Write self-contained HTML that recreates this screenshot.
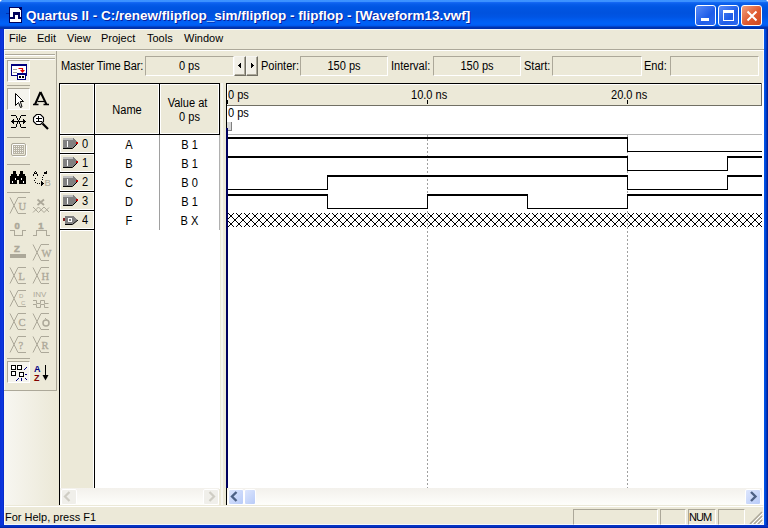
<!DOCTYPE html>
<html><head><meta charset="utf-8"><style>
*{margin:0;padding:0;box-sizing:border-box}
html,body{width:768px;height:528px;overflow:hidden;background:#fff}
body{position:relative;font-family:"Liberation Sans",sans-serif;font-size:11px;color:#000}
.a{position:absolute;white-space:nowrap}
.menu{top:32px}
.btn{top:5px;width:21px;height:21px;border:1px solid #fff;border-radius:3px}
.lbl{top:59px}
.box{top:56px;height:20px;border-top:1px solid #ACA899;border-left:1px solid #ACA899;border-bottom:1px solid #fff;border-right:1px solid #fff;text-align:center;line-height:18px}
.hd{text-align:center;font-size:12px;transform:scaleX(.92);transform-origin:50% 0}
.q{font-size:12px;transform:scaleX(.92);transform-origin:0 0}
.box span{display:inline-block;font-size:12px;transform:scaleX(.92)}
.cell{height:19px;line-height:19px;text-align:center;font-size:12px;transform:scaleX(.92);transform-origin:50% 0}
.sb{height:17px;background:linear-gradient(to bottom,#F3F1EC,#FEFEFB)}
.sp{position:absolute;top:509px;height:16px;border-bottom:1px solid #fff;border-top:1px solid #ACA899;border-left:1px solid #ACA899;border-right:1px solid #fff}
.tb{position:absolute;top:56px;width:12px;height:20px;background:#F1EFE6;border-top:1px solid #F6F5F0;border-left:1px solid #F6F5F0;border-right:1px solid #716F64;border-bottom:1px solid #716F64;box-shadow:inset -1px -1px 0 #ACA899}
.sbtn{position:absolute;width:16px;height:16px;border-radius:2px;border:1px solid #fff}
</style></head><body>
<div class="a" style="left:0;top:0;width:768px;height:528px;background:#0045D8;border-radius:4px 4px 0 0"></div>
<div class="a" style="left:0;top:0;width:768px;height:29px;border-radius:4px 4px 0 0;background:linear-gradient(to bottom,#3D93FF 0px,#3A90FF 2px,#1468F4 2.5px,#085EEA 4px,#0056E3 7px,#0052DE 13px,#0055E4 17px,#005EF2 21px,#0062F8 24px,#0056EA 26px,#0036B4 27px,#0030A8 29px)"></div>
<div class="a" style="left:0;top:29px;width:4px;height:499px;background:linear-gradient(to right,#0A30D4,#0A36E0 60%,#0626C0)"></div>
<div class="a" style="left:764px;top:29px;width:4px;height:499px;background:linear-gradient(to right,#0058EE,#0048D8 40%,#0030B0 70%,#001890)"></div>
<div class="a" style="left:0;top:525px;width:768px;height:3px;background:linear-gradient(to bottom,#0636C8,#0430C0 50%,#0020A0)"></div>
<svg class="a" style="left:0;top:0" width="30" height="30" shape-rendering="crispEdges">
<rect x="6" y="13" width="3" height="1" fill="#0030B0"/>
<rect x="9" y="7" width="13" height="16" fill="#00005A"/>
<rect x="10" y="8" width="11" height="14" fill="#fff"/>
<rect x="19" y="8" width="2" height="1" fill="#00005A"/><rect x="20" y="9" width="1" height="1" fill="#00005A"/>
<rect x="19" y="9" width="1" height="1" fill="#fff"/>
<rect x="10" y="17" width="5" height="2" fill="#00005A"/>
<rect x="13" y="12" width="2" height="7" fill="#00005A"/>
<rect x="13" y="12" width="7" height="3" fill="#00005A"/>
<rect x="18" y="12" width="2" height="7" fill="#00005A"/>
<rect x="18" y="17" width="3" height="2" fill="#00005A"/>
</svg>
<div class="a" style="left:26px;top:8px;font-size:13.5px;font-weight:bold;color:#fff;text-shadow:1px 1px 0 #0A1E9C">Quartus II - C:/renew/flipflop_sim/flipflop - flipflop - [Waveform13.vwf]</div>
<div class="a btn" style="left:695px;background:linear-gradient(135deg,#5A8CF8,#1E5CE8 60%,#2E6AF0)"><div class="a" style="left:5px;top:12px;width:8px;height:3px;background:#fff"></div></div>
<div class="a btn" style="left:718px;background:linear-gradient(135deg,#5A8CF8,#1E5CE8 60%,#2E6AF0)"><div class="a" style="left:4px;top:4px;width:11px;height:11px;border:1px solid #fff;border-top-width:3px"></div></div>
<div class="a btn" style="left:741px;background:linear-gradient(135deg,#F0A080,#E05A30 55%,#D04A20)"><svg class="a" style="left:4px;top:4px" width="12" height="12"><path d="M1.5 1.5L10.5 10.5M10.5 1.5L1.5 10.5" stroke="#fff" stroke-width="2"/></svg></div>
<div class="a" style="left:4px;top:29px;width:760px;height:496px;background:#ECE9D8"></div>
<div class="a" style="left:4px;top:524px;width:760px;height:1px;background:#F4F8FC"></div>
<div class="a" style="left:4px;top:29px;width:760px;height:1px;background:#F4F8FC"></div>
<div class="a" style="left:4px;top:29px;width:1px;height:496px;background:#F4F8FC"></div>
<div class="a" style="left:763px;top:29px;width:1px;height:496px;background:#F4F8FC"></div>
<div class="a" style="left:4px;top:506px;width:760px;height:1px;background:#FFFFFF"></div>
<div class="a menu" style="left:9px">File</div>
<div class="a menu" style="left:37px">Edit</div>
<div class="a menu" style="left:67px">View</div>
<div class="a menu" style="left:101px">Project</div>
<div class="a menu" style="left:147px">Tools</div>
<div class="a menu" style="left:184px">Window</div>
<div class="a" style="left:4px;top:49px;width:760px;height:1px;background:#ACA899"></div>
<div class="a" style="left:4px;top:50px;width:760px;height:1px;background:#fff"></div>
<div class="a" style="left:4px;top:391px;width:52px;height:114px;background:linear-gradient(to right,#F7F6F1,#ECE9D8)"></div>
<div class="a" style="left:56px;top:51px;width:1px;height:340px;background:#ACA899"></div>
<div class="a" style="left:4px;top:390px;width:53px;height:1px;background:#ACA899"></div>
<div class="a" style="left:5px;top:54px;width:50px;height:1px;background:#ACA899"></div>
<div class="a" style="left:5px;top:55px;width:50px;height:1px;background:#fff"></div>
<div class="a" style="left:5px;top:58px;width:50px;height:1px;background:#ACA899"></div>
<div class="a" style="left:5px;top:59px;width:50px;height:1px;background:#fff"></div>
<div class="a" style="left:7px;top:85px;width:23px;height:1px;background:#ACA899"></div>
<div class="a" style="left:7px;top:137px;width:23px;height:1px;background:#ACA899"></div>
<div class="a" style="left:7px;top:164px;width:23px;height:1px;background:#ACA899"></div>
<div class="a" style="left:7px;top:192px;width:23px;height:1px;background:#ACA899"></div>
<div class="a" style="left:7px;top:358px;width:23px;height:1px;background:#ACA899"></div>
<div class="a" style="left:7px;top:60px;width:23px;height:22px;background:#F5F4EE;border-top:1px solid #ACA899;border-left:1px solid #ACA899;border-right:1px solid #fff;border-bottom:1px solid #fff"></div>
<div class="a" style="left:7px;top:88px;width:23px;height:22px;background:#F5F4EE;border-top:1px solid #ACA899;border-left:1px solid #ACA899;border-right:1px solid #fff;border-bottom:1px solid #fff"></div>
<div class="a" style="left:7px;top:361px;width:23px;height:22px;background:#F5F4EE;border-top:1px solid #ACA899;border-left:1px solid #ACA899;border-right:1px solid #fff;border-bottom:1px solid #fff"></div>
<svg class="a" style="left:0;top:0" width="768" height="528"><rect x="11" y="64" width="16" height="12" fill="#000080"/><rect x="12" y="66" width="14" height="9" fill="#fff"/><rect x="13" y="69" width="4" height="1" fill="#A0A0A0"/><rect x="13" y="72" width="4" height="1" fill="#A0A0A0"/><path d="M18.5 68.5 H22.5 V71" stroke="#E00000" fill="none" stroke-width="1.2"/><path d="M20 70 H25 L22.5 73 Z" fill="#E00000"/><rect x="17" y="73" width="9" height="7" fill="#000080"/><rect x="18" y="75" width="7" height="4" fill="#fff"/><rect x="19" y="76" width="2" height="2" fill="#000"/><rect x="22" y="76" width="2" height="2" fill="#000"/><path d="M15.5 93.5 V105.5 L18.5 102.5 L20.5 107.5 L22 106.8 L20.3 101.5 H23.5 Z" fill="#fff" stroke="#000" stroke-width="1"/><path d="M40.5 92 L35 104.5 M40.5 92 L46.5 104.5" stroke="#000" stroke-width="2" fill="none"/><path d="M37.5 101.5 H44" stroke="#000" stroke-width="1.2"/><path d="M33 104.5 H38.5 M43.5 104.5 H49" stroke="#000" stroke-width="1.6"/><g shape-rendering="crispEdges"><rect x="11" y="115" width="5" height="1" fill="#000"/><rect x="21" y="115" width="5" height="1" fill="#000"/><rect x="11" y="127" width="5" height="1" fill="#000"/><rect x="21" y="127" width="5" height="1" fill="#000"/><rect x="11" y="121" width="15" height="1" fill="#000"/><rect x="12" y="120" width="1" height="3" fill="#000"/><rect x="13" y="119" width="1" height="5" fill="#000"/><rect x="24" y="120" width="1" height="3" fill="#000"/><rect x="23" y="119" width="1" height="5" fill="#000"/><rect x="16" y="116" width="1" height="1" fill="#000"/><rect x="20" y="116" width="1" height="1" fill="#000"/><rect x="16" y="117" width="1" height="1" fill="#000"/><rect x="20" y="117" width="1" height="1" fill="#000"/><rect x="17" y="118" width="1" height="1" fill="#000"/><rect x="19" y="118" width="1" height="1" fill="#000"/><rect x="17" y="119" width="1" height="1" fill="#000"/><rect x="19" y="119" width="1" height="1" fill="#000"/><rect x="18" y="120" width="1" height="1" fill="#000"/><rect x="18" y="120" width="1" height="1" fill="#000"/><rect x="19" y="122" width="1" height="1" fill="#000"/><rect x="17" y="122" width="1" height="1" fill="#000"/><rect x="19" y="123" width="1" height="1" fill="#000"/><rect x="17" y="123" width="1" height="1" fill="#000"/><rect x="20" y="124" width="1" height="1" fill="#000"/><rect x="16" y="124" width="1" height="1" fill="#000"/><rect x="20" y="125" width="1" height="1" fill="#000"/><rect x="16" y="125" width="1" height="1" fill="#000"/><rect x="20" y="126" width="1" height="1" fill="#000"/><rect x="16" y="126" width="1" height="1" fill="#000"/></g><path d="M36.5 114.5 H40.5 L43.5 117.5 V121.5 L40.5 124.5 H36.5 L33.5 121.5 V117.5 Z" fill="#fff" stroke="#000" stroke-width="1.1"/><g shape-rendering="crispEdges"><rect x="36" y="118" width="6" height="1" fill="#000"/><rect x="38" y="116" width="1" height="5" fill="#000"/><rect x="36" y="121" width="6" height="1" fill="#000"/></g><path d="M42.5 123.5 L48 129" stroke="#000" stroke-width="2.2"/><rect x="12.5" y="144.5" width="14" height="12" rx="1.5" fill="none" stroke="#fff"/><rect x="11.5" y="143.5" width="14" height="12" rx="1.5" fill="none" stroke="#ACA899"/><rect x="13" y="145" width="11" height="9" fill="#B8B4A6"/><rect x="14" y="146" width="1" height="1" fill="#F4F2EA"/><rect x="14" y="148" width="1" height="1" fill="#F4F2EA"/><rect x="14" y="150" width="1" height="1" fill="#F4F2EA"/><rect x="14" y="152" width="1" height="1" fill="#F4F2EA"/><rect x="16" y="146" width="1" height="1" fill="#F4F2EA"/><rect x="16" y="148" width="1" height="1" fill="#F4F2EA"/><rect x="16" y="150" width="1" height="1" fill="#F4F2EA"/><rect x="16" y="152" width="1" height="1" fill="#F4F2EA"/><rect x="18" y="146" width="1" height="1" fill="#F4F2EA"/><rect x="18" y="148" width="1" height="1" fill="#F4F2EA"/><rect x="18" y="150" width="1" height="1" fill="#F4F2EA"/><rect x="18" y="152" width="1" height="1" fill="#F4F2EA"/><rect x="20" y="146" width="1" height="1" fill="#F4F2EA"/><rect x="20" y="148" width="1" height="1" fill="#F4F2EA"/><rect x="20" y="150" width="1" height="1" fill="#F4F2EA"/><rect x="20" y="152" width="1" height="1" fill="#F4F2EA"/><rect x="22" y="146" width="1" height="1" fill="#F4F2EA"/><rect x="22" y="148" width="1" height="1" fill="#F4F2EA"/><rect x="22" y="150" width="1" height="1" fill="#F4F2EA"/><rect x="22" y="152" width="1" height="1" fill="#F4F2EA"/><g shape-rendering="crispEdges"><rect x="13" y="171" width="3" height="4" fill="#000"/><rect x="20" y="171" width="3" height="4" fill="#000"/><rect x="11" y="174" width="6" height="10" fill="#000"/><rect x="10" y="176" width="1" height="8" fill="#000"/><rect x="19" y="174" width="6" height="10" fill="#000"/><rect x="25" y="176" width="1" height="8" fill="#000"/><rect x="17" y="176" width="2" height="4" fill="#000"/><rect x="12" y="181" width="1" height="2" fill="#fff"/><rect x="15" y="178" width="1" height="2" fill="#fff"/><rect x="21" y="178" width="1" height="2" fill="#fff"/><rect x="23" y="181" width="1" height="2" fill="#fff"/></g><g shape-rendering="crispEdges"><rect x="35" y="171" width="1" height="1" fill="#000"/><rect x="34" y="172" width="1" height="1" fill="#000"/><rect x="36" y="172" width="1" height="1" fill="#000"/><rect x="34" y="173" width="1" height="1" fill="#000"/><rect x="35" y="173" width="1" height="1" fill="#000"/><rect x="36" y="173" width="1" height="1" fill="#000"/><rect x="33" y="174" width="1" height="1" fill="#000"/><rect x="37" y="174" width="1" height="1" fill="#000"/><rect x="33" y="175" width="1" height="1" fill="#000"/><rect x="37" y="175" width="1" height="1" fill="#000"/><rect x="35" y="178" width="1" height="1" fill="#000"/><rect x="34" y="180" width="1" height="1" fill="#000"/><rect x="35" y="182" width="1" height="1" fill="#000"/><rect x="37" y="183" width="1" height="1" fill="#000"/><rect x="39" y="183" width="1" height="1" fill="#000"/><rect x="41" y="181" width="1" height="1" fill="#000"/><rect x="41" y="182" width="1" height="1" fill="#000"/><rect x="41" y="183" width="1" height="1" fill="#000"/><rect x="41" y="184" width="1" height="1" fill="#000"/><rect x="41" y="185" width="1" height="1" fill="#000"/><rect x="42" y="182" width="1" height="1" fill="#000"/><rect x="42" y="183" width="1" height="1" fill="#000"/><rect x="42" y="184" width="1" height="1" fill="#000"/><rect x="43" y="183" width="1" height="1" fill="#000"/><rect x="42" y="179" width="1" height="1" fill="#000"/><rect x="42" y="177" width="1" height="1" fill="#000"/><rect x="43" y="175" width="1" height="1" fill="#000"/><rect x="44" y="172" width="1" height="1" fill="#000"/><rect x="45" y="172" width="1" height="1" fill="#000"/><rect x="46" y="172" width="1" height="1" fill="#000"/><rect x="46" y="171" width="1" height="1" fill="#000"/><rect x="45" y="173" width="1" height="1" fill="#000"/><rect x="46" y="173" width="1" height="1" fill="#000"/><rect x="44" y="173" width="1" height="1" fill="#000"/></g><text x="44.5" y="186" font-size="9.5" fill="#ACA899">B</text><path d="M10 197.5 L14 205.5 L10 213.5 M18 197.5 L14 205.5 L18 213.5" stroke="#ACA899" fill="none"/><path d="M18 197.5 H26 M18 213.5 H26" stroke="#ACA899" shape-rendering="crispEdges"/><text x="18.5" y="209.5" font-family="Liberation Serif" font-size="10.5" fill="#ACA899" stroke="#ACA899" stroke-width="0.3">U</text><path d="M10 267.5 L14 275.5 L10 283.5 M18 267.5 L14 275.5 L18 283.5" stroke="#ACA899" fill="none"/><path d="M18 267.5 H26 M18 283.5 H26" stroke="#ACA899" shape-rendering="crispEdges"/><text x="18.5" y="279.5" font-family="Liberation Serif" font-size="10.5" fill="#ACA899" stroke="#ACA899" stroke-width="0.3">L</text><path d="M33 267.5 L37 275.5 L33 283.5 M41 267.5 L37 275.5 L41 283.5" stroke="#ACA899" fill="none"/><path d="M41 267.5 H49 M41 283.5 H49" stroke="#ACA899" shape-rendering="crispEdges"/><text x="41.5" y="279.5" font-family="Liberation Serif" font-size="10.5" fill="#ACA899" stroke="#ACA899" stroke-width="0.3">H</text><path d="M10 313.5 L14 321.5 L10 329.5 M18 313.5 L14 321.5 L18 329.5" stroke="#ACA899" fill="none"/><path d="M18 313.5 H26 M18 329.5 H26" stroke="#ACA899" shape-rendering="crispEdges"/><text x="18.5" y="325.5" font-family="Liberation Serif" font-size="10.5" fill="#ACA899" stroke="#ACA899" stroke-width="0.3">C</text><path d="M33 313.5 L37 321.5 L33 329.5 M41 313.5 L37 321.5 L41 329.5" stroke="#ACA899" fill="none"/><path d="M41 313.5 H49 M41 329.5 H49" stroke="#ACA899" shape-rendering="crispEdges"/><path d="M10 336.5 L14 344.5 L10 352.5 M18 336.5 L14 344.5 L18 352.5" stroke="#ACA899" fill="none"/><path d="M18 336.5 H26 M18 352.5 H26" stroke="#ACA899" shape-rendering="crispEdges"/><text x="18.5" y="348.5" font-family="Liberation Serif" font-size="10.5" fill="#ACA899" stroke="#ACA899" stroke-width="0.3">?</text><path d="M33 336.5 L37 344.5 L33 352.5 M41 336.5 L37 344.5 L41 352.5" stroke="#ACA899" fill="none"/><path d="M41 336.5 H49 M41 352.5 H49" stroke="#ACA899" shape-rendering="crispEdges"/><text x="41.5" y="348.5" font-family="Liberation Serif" font-size="10.5" fill="#ACA899" stroke="#ACA899" stroke-width="0.3">R</text><path d="M33 244.5 L37 252.5 L33 260.5 M41 244.5 L37 252.5 L41 260.5" stroke="#ACA899" fill="none"/><path d="M41 244.5 H49 M41 260.5 H49" stroke="#ACA899" shape-rendering="crispEdges"/><text x="41.5" y="256.5" font-family="Liberation Serif" font-size="10.5" fill="#ACA899" stroke="#ACA899" stroke-width="0.3">W</text><path d="M10 290.5 L14 298.5 L10 306.5 M18 290.5 L14 298.5 L18 306.5" stroke="#ACA899" fill="none"/><path d="M18 290.5 H26 M18 306.5 H26" stroke="#ACA899" shape-rendering="crispEdges"/><text x="19" y="298" font-size="6" fill="#ACA899">D</text><text x="21" y="305" font-size="6" fill="#ACA899">C</text><circle cx="46" cy="323" r="3" fill="none" stroke="#ACA899" stroke-width="1.5"/><path d="M45 318 L47 320" stroke="#ACA899"/><path d="M37.5 199.5 L44 205 M44 199.5 L37.5 205" stroke="#ACA899" stroke-width="1.8" fill="none"/><path d="M33 207 L38.5 212.5 M38.5 207 L44 212.5 M44 207 L49 212 M33 212.5 L38.5 207 M38.5 212.5 L44 207 M44 212.5 L49 207.5" stroke="#ACA899" stroke-width="1" fill="none"/><text x="14.5" y="229" font-size="9.5" font-weight="bold" fill="#ACA899" stroke="#ACA899" stroke-width="0.5">0</text><path d="M10 230.5 H14.5 V235.5 H22.5 V230.5 H26" stroke="#ACA899" fill="none" shape-rendering="crispEdges"/><text x="38.3" y="229" font-size="9.5" font-weight="bold" fill="#ACA899" stroke="#ACA899" stroke-width="0.5">1</text><path d="M33 235.5 H36.5 V230.5 H46.5 V235.5 H50" stroke="#ACA899" fill="none" shape-rendering="crispEdges"/><text x="14" y="252" font-size="9.5" font-weight="bold" fill="#ACA899" stroke="#ACA899" stroke-width="0.5">Z</text><rect x="10" y="254" width="16" height="4" fill="#ACA899"/><text x="33" y="297" font-size="8" fill="#ACA899">INV</text><path d="M33 300.5 H36.5 V303.5 H40.5 V300.5 H44.5 V303.5 H48.5 M33 304.5 H36.5 V307.5 H40.5 V304.5 H44.5 V307.5 H48.5" stroke="#ACA899" fill="none"/><g shape-rendering="crispEdges"><rect x="11" y="365" width="5" height="5" fill="#000"/><rect x="12" y="366" width="3" height="3" fill="#fff"/><rect x="17" y="365" width="5" height="5" fill="#000"/><rect x="18" y="366" width="3" height="3" fill="#fff"/><rect x="11" y="371" width="5" height="5" fill="#000"/><rect x="12" y="372" width="3" height="3" fill="#fff"/><rect x="19" y="372" width="5" height="5" fill="#000"/><rect x="20" y="373" width="3" height="3" fill="#fff"/><rect x="24" y="369" width="1" height="1" fill="#000080"/><rect x="25" y="368" width="1" height="1" fill="#000080"/><rect x="26" y="367" width="1" height="1" fill="#000080"/><rect x="25" y="374" width="2" height="1" fill="#000080"/><rect x="25" y="378" width="1" height="1" fill="#000080"/><rect x="26" y="379" width="1" height="1" fill="#000080"/><rect x="21" y="378" width="1" height="3" fill="#000080"/><rect x="16" y="380" width="1" height="1" fill="#000080"/><rect x="17" y="379" width="1" height="1" fill="#000080"/><rect x="18" y="378" width="1" height="1" fill="#000080"/></g><text x="34" y="372" font-size="9" font-weight="bold" fill="#000080">A</text><text x="34" y="381" font-size="9" font-weight="bold" fill="#800000">Z</text><rect x="45" y="365" width="1" height="12" fill="#000" shape-rendering="crispEdges"/><path d="M42.5 375 H48.5 L45.5 380.5 Z" fill="#000"/></svg>
<div class="a lbl q" style="left:61px;letter-spacing:-0.12px">Master Time Bar:</div>
<div class="a box" style="left:145px;width:89px"><span>0 ps</span></div>
<div class="tb" style="left:234px"></div><div class="tb" style="left:246px"></div>
<svg class="a" style="left:0;top:0" width="300" height="90" shape-rendering="crispEdges"><rect x="238" y="65" width="1" height="1"/><rect x="239" y="64" width="1" height="3"/><rect x="240" y="63" width="1" height="5"/><rect x="253" y="65" width="1" height="1"/><rect x="252" y="64" width="1" height="3"/><rect x="251" y="63" width="1" height="5"/></svg>
<div class="a lbl q" style="left:261px">Pointer:</div>
<div class="a box" style="left:300px;width:88px"><span>150 ps</span></div>
<div class="a lbl q" style="left:391px">Interval:</div>
<div class="a box" style="left:433px;width:88px"><span>150 ps</span></div>
<div class="a lbl q" style="left:524px">Start:</div>
<div class="a box" style="left:552px;width:90px"></div>
<div class="a lbl q" style="left:644px">End:</div>
<div class="a box" style="left:670px;width:89px"></div>
<svg class="a" style="left:0;top:0" width="768" height="528" shape-rendering="crispEdges"><rect x="59" y="83" width="161" height="406" fill="#fff"/><rect x="59" y="83" width="161" height="52" fill="#000"/><rect x="60" y="84" width="34" height="50" fill="#fff"/><rect x="61" y="85" width="32" height="48" fill="#ECE9D8"/><rect x="95" y="84" width="64" height="50" fill="#fff"/><rect x="96" y="85" width="62" height="48" fill="#ECE9D8"/><rect x="160" y="84" width="59" height="50" fill="#fff"/><rect x="161" y="85" width="57" height="48" fill="#ECE9D8"/><rect x="59" y="135" width="36" height="370" fill="#000"/><rect x="60" y="135" width="34" height="18" fill="#fff"/><rect x="61" y="136" width="32" height="16" fill="#ECE9D8"/><rect x="60" y="154" width="34" height="18" fill="#fff"/><rect x="61" y="155" width="32" height="16" fill="#ECE9D8"/><rect x="60" y="173" width="34" height="18" fill="#fff"/><rect x="61" y="174" width="32" height="16" fill="#ECE9D8"/><rect x="60" y="192" width="34" height="18" fill="#fff"/><rect x="61" y="193" width="32" height="16" fill="#ECE9D8"/><rect x="60" y="211" width="34" height="18" fill="#fff"/><rect x="61" y="212" width="32" height="16" fill="#ECE9D8"/><rect x="60" y="230" width="34" height="258" fill="#fff"/><rect x="61" y="231" width="32" height="257" fill="#ECE9D8"/><rect x="159" y="135" width="1" height="95" fill="#A0A0A0"/><rect x="219" y="135" width="1" height="95" fill="#B0B0B0"/><path d="M63 138 H73 L78 143 L73 148 H63 Z" fill="#808080"/><rect x="63" y="138" width="10" height="2" fill="#C0C0C0"/><path d="M63 148.5 H72.5 L78 143" stroke="#000" fill="none" shape-rendering="auto"/><rect x="67" y="141" width="1" height="6" fill="#fff"/><rect x="76" y="142" width="2" height="2" fill="#C00000"/><path d="M63 157 H73 L78 162 L73 167 H63 Z" fill="#808080"/><rect x="63" y="157" width="10" height="2" fill="#C0C0C0"/><path d="M63 167.5 H72.5 L78 162" stroke="#000" fill="none" shape-rendering="auto"/><rect x="67" y="160" width="1" height="6" fill="#fff"/><rect x="76" y="161" width="2" height="2" fill="#C00000"/><path d="M63 176 H73 L78 181 L73 186 H63 Z" fill="#808080"/><rect x="63" y="176" width="10" height="2" fill="#C0C0C0"/><path d="M63 186.5 H72.5 L78 181" stroke="#000" fill="none" shape-rendering="auto"/><rect x="67" y="179" width="1" height="6" fill="#fff"/><rect x="76" y="180" width="2" height="2" fill="#C00000"/><path d="M63 195 H73 L78 200 L73 205 H63 Z" fill="#808080"/><rect x="63" y="195" width="10" height="2" fill="#C0C0C0"/><path d="M63 205.5 H72.5 L78 200" stroke="#000" fill="none" shape-rendering="auto"/><rect x="67" y="198" width="1" height="6" fill="#fff"/><rect x="76" y="199" width="2" height="2" fill="#C00000"/><path d="M65 216 H73 L78 220 L73 224 H65 Z" fill="#808080"/><path d="M65 224.5 H72.5 L78 220" stroke="#000" fill="none" shape-rendering="auto"/><rect x="63" y="218" width="2" height="3" fill="#802020"/><rect x="68.5" y="218.5" width="3" height="3" fill="none" stroke="#fff"/></svg>
<div class="a q" style="left:82px;top:137px">0</div>
<div class="a q" style="left:82px;top:156px">1</div>
<div class="a q" style="left:82px;top:175px">2</div>
<div class="a q" style="left:82px;top:194px">3</div>
<div class="a q" style="left:82px;top:213px">4</div>
<div class="a hd" style="left:95px;top:103px;width:64px">Name</div>
<div class="a hd" style="left:158px;top:96px;width:59px">Value at</div>
<div class="a hd" style="left:160px;top:110px;width:59px">0 ps</div>
<div class="a cell" style="left:97px;top:136px;width:64px">A</div>
<div class="a cell" style="left:160px;top:136px;width:59px">B 1</div>
<div class="a cell" style="left:97px;top:155px;width:64px">B</div>
<div class="a cell" style="left:160px;top:155px;width:59px">B 1</div>
<div class="a cell" style="left:97px;top:174px;width:64px">C</div>
<div class="a cell" style="left:160px;top:174px;width:59px">B 0</div>
<div class="a cell" style="left:97px;top:193px;width:64px">D</div>
<div class="a cell" style="left:160px;top:193px;width:59px">B 1</div>
<div class="a cell" style="left:97px;top:212px;width:64px">F</div>
<div class="a cell" style="left:160px;top:212px;width:59px">B X</div>
<div class="a" style="left:221px;top:83px;width:2px;height:422px;background:#F6F5EF"></div>
<svg class="a" style="left:0;top:0" width="768" height="528" shape-rendering="crispEdges"><rect x="226" y="83" width="538" height="422" fill="#fff"/><rect x="226" y="83" width="536" height="23" fill="#716F64"/><rect x="226" y="83" width="535" height="1" fill="#000"/><rect x="226" y="83" width="1" height="23" fill="#000"/><rect x="227" y="84" width="534" height="21" fill="#ECE9D8"/><rect x="227" y="84" width="534" height="1" fill="#fff"/><rect x="227" y="84" width="1" height="21" fill="#fff"/><rect x="227" y="100" width="1" height="4" fill="#000"/><rect x="427" y="100" width="1" height="4" fill="#000"/><rect x="627" y="100" width="1" height="4" fill="#000"/><rect x="226" y="106" width="1" height="399" fill="#000"/><rect x="427" y="135" width="1" height="2" fill="#A0A0A0"/><rect x="427" y="139" width="1" height="2" fill="#A0A0A0"/><rect x="427" y="143" width="1" height="2" fill="#A0A0A0"/><rect x="427" y="147" width="1" height="2" fill="#A0A0A0"/><rect x="427" y="151" width="1" height="2" fill="#A0A0A0"/><rect x="427" y="155" width="1" height="2" fill="#A0A0A0"/><rect x="427" y="159" width="1" height="2" fill="#A0A0A0"/><rect x="427" y="163" width="1" height="2" fill="#A0A0A0"/><rect x="427" y="167" width="1" height="2" fill="#A0A0A0"/><rect x="427" y="171" width="1" height="2" fill="#A0A0A0"/><rect x="427" y="175" width="1" height="2" fill="#A0A0A0"/><rect x="427" y="179" width="1" height="2" fill="#A0A0A0"/><rect x="427" y="183" width="1" height="2" fill="#A0A0A0"/><rect x="427" y="187" width="1" height="2" fill="#A0A0A0"/><rect x="427" y="191" width="1" height="2" fill="#A0A0A0"/><rect x="427" y="195" width="1" height="2" fill="#A0A0A0"/><rect x="427" y="199" width="1" height="2" fill="#A0A0A0"/><rect x="427" y="203" width="1" height="2" fill="#A0A0A0"/><rect x="427" y="207" width="1" height="2" fill="#A0A0A0"/><rect x="427" y="211" width="1" height="2" fill="#A0A0A0"/><rect x="427" y="215" width="1" height="2" fill="#A0A0A0"/><rect x="427" y="219" width="1" height="2" fill="#A0A0A0"/><rect x="427" y="223" width="1" height="2" fill="#A0A0A0"/><rect x="427" y="227" width="1" height="2" fill="#A0A0A0"/><rect x="427" y="231" width="1" height="2" fill="#A0A0A0"/><rect x="427" y="235" width="1" height="2" fill="#A0A0A0"/><rect x="427" y="239" width="1" height="2" fill="#A0A0A0"/><rect x="427" y="243" width="1" height="2" fill="#A0A0A0"/><rect x="427" y="247" width="1" height="2" fill="#A0A0A0"/><rect x="427" y="251" width="1" height="2" fill="#A0A0A0"/><rect x="427" y="255" width="1" height="2" fill="#A0A0A0"/><rect x="427" y="259" width="1" height="2" fill="#A0A0A0"/><rect x="427" y="263" width="1" height="2" fill="#A0A0A0"/><rect x="427" y="267" width="1" height="2" fill="#A0A0A0"/><rect x="427" y="271" width="1" height="2" fill="#A0A0A0"/><rect x="427" y="275" width="1" height="2" fill="#A0A0A0"/><rect x="427" y="279" width="1" height="2" fill="#A0A0A0"/><rect x="427" y="283" width="1" height="2" fill="#A0A0A0"/><rect x="427" y="287" width="1" height="2" fill="#A0A0A0"/><rect x="427" y="291" width="1" height="2" fill="#A0A0A0"/><rect x="427" y="295" width="1" height="2" fill="#A0A0A0"/><rect x="427" y="299" width="1" height="2" fill="#A0A0A0"/><rect x="427" y="303" width="1" height="2" fill="#A0A0A0"/><rect x="427" y="307" width="1" height="2" fill="#A0A0A0"/><rect x="427" y="311" width="1" height="2" fill="#A0A0A0"/><rect x="427" y="315" width="1" height="2" fill="#A0A0A0"/><rect x="427" y="319" width="1" height="2" fill="#A0A0A0"/><rect x="427" y="323" width="1" height="2" fill="#A0A0A0"/><rect x="427" y="327" width="1" height="2" fill="#A0A0A0"/><rect x="427" y="331" width="1" height="2" fill="#A0A0A0"/><rect x="427" y="335" width="1" height="2" fill="#A0A0A0"/><rect x="427" y="339" width="1" height="2" fill="#A0A0A0"/><rect x="427" y="343" width="1" height="2" fill="#A0A0A0"/><rect x="427" y="347" width="1" height="2" fill="#A0A0A0"/><rect x="427" y="351" width="1" height="2" fill="#A0A0A0"/><rect x="427" y="355" width="1" height="2" fill="#A0A0A0"/><rect x="427" y="359" width="1" height="2" fill="#A0A0A0"/><rect x="427" y="363" width="1" height="2" fill="#A0A0A0"/><rect x="427" y="367" width="1" height="2" fill="#A0A0A0"/><rect x="427" y="371" width="1" height="2" fill="#A0A0A0"/><rect x="427" y="375" width="1" height="2" fill="#A0A0A0"/><rect x="427" y="379" width="1" height="2" fill="#A0A0A0"/><rect x="427" y="383" width="1" height="2" fill="#A0A0A0"/><rect x="427" y="387" width="1" height="2" fill="#A0A0A0"/><rect x="427" y="391" width="1" height="2" fill="#A0A0A0"/><rect x="427" y="395" width="1" height="2" fill="#A0A0A0"/><rect x="427" y="399" width="1" height="2" fill="#A0A0A0"/><rect x="427" y="403" width="1" height="2" fill="#A0A0A0"/><rect x="427" y="407" width="1" height="2" fill="#A0A0A0"/><rect x="427" y="411" width="1" height="2" fill="#A0A0A0"/><rect x="427" y="415" width="1" height="2" fill="#A0A0A0"/><rect x="427" y="419" width="1" height="2" fill="#A0A0A0"/><rect x="427" y="423" width="1" height="2" fill="#A0A0A0"/><rect x="427" y="427" width="1" height="2" fill="#A0A0A0"/><rect x="427" y="431" width="1" height="2" fill="#A0A0A0"/><rect x="427" y="435" width="1" height="2" fill="#A0A0A0"/><rect x="427" y="439" width="1" height="2" fill="#A0A0A0"/><rect x="427" y="443" width="1" height="2" fill="#A0A0A0"/><rect x="427" y="447" width="1" height="2" fill="#A0A0A0"/><rect x="427" y="451" width="1" height="2" fill="#A0A0A0"/><rect x="427" y="455" width="1" height="2" fill="#A0A0A0"/><rect x="427" y="459" width="1" height="2" fill="#A0A0A0"/><rect x="427" y="463" width="1" height="2" fill="#A0A0A0"/><rect x="427" y="467" width="1" height="2" fill="#A0A0A0"/><rect x="427" y="471" width="1" height="2" fill="#A0A0A0"/><rect x="427" y="475" width="1" height="2" fill="#A0A0A0"/><rect x="427" y="479" width="1" height="2" fill="#A0A0A0"/><rect x="427" y="483" width="1" height="2" fill="#A0A0A0"/><rect x="427" y="487" width="1" height="1" fill="#A0A0A0"/><rect x="627" y="135" width="1" height="2" fill="#A0A0A0"/><rect x="627" y="139" width="1" height="2" fill="#A0A0A0"/><rect x="627" y="143" width="1" height="2" fill="#A0A0A0"/><rect x="627" y="147" width="1" height="2" fill="#A0A0A0"/><rect x="627" y="151" width="1" height="2" fill="#A0A0A0"/><rect x="627" y="155" width="1" height="2" fill="#A0A0A0"/><rect x="627" y="159" width="1" height="2" fill="#A0A0A0"/><rect x="627" y="163" width="1" height="2" fill="#A0A0A0"/><rect x="627" y="167" width="1" height="2" fill="#A0A0A0"/><rect x="627" y="171" width="1" height="2" fill="#A0A0A0"/><rect x="627" y="175" width="1" height="2" fill="#A0A0A0"/><rect x="627" y="179" width="1" height="2" fill="#A0A0A0"/><rect x="627" y="183" width="1" height="2" fill="#A0A0A0"/><rect x="627" y="187" width="1" height="2" fill="#A0A0A0"/><rect x="627" y="191" width="1" height="2" fill="#A0A0A0"/><rect x="627" y="195" width="1" height="2" fill="#A0A0A0"/><rect x="627" y="199" width="1" height="2" fill="#A0A0A0"/><rect x="627" y="203" width="1" height="2" fill="#A0A0A0"/><rect x="627" y="207" width="1" height="2" fill="#A0A0A0"/><rect x="627" y="211" width="1" height="2" fill="#A0A0A0"/><rect x="627" y="215" width="1" height="2" fill="#A0A0A0"/><rect x="627" y="219" width="1" height="2" fill="#A0A0A0"/><rect x="627" y="223" width="1" height="2" fill="#A0A0A0"/><rect x="627" y="227" width="1" height="2" fill="#A0A0A0"/><rect x="627" y="231" width="1" height="2" fill="#A0A0A0"/><rect x="627" y="235" width="1" height="2" fill="#A0A0A0"/><rect x="627" y="239" width="1" height="2" fill="#A0A0A0"/><rect x="627" y="243" width="1" height="2" fill="#A0A0A0"/><rect x="627" y="247" width="1" height="2" fill="#A0A0A0"/><rect x="627" y="251" width="1" height="2" fill="#A0A0A0"/><rect x="627" y="255" width="1" height="2" fill="#A0A0A0"/><rect x="627" y="259" width="1" height="2" fill="#A0A0A0"/><rect x="627" y="263" width="1" height="2" fill="#A0A0A0"/><rect x="627" y="267" width="1" height="2" fill="#A0A0A0"/><rect x="627" y="271" width="1" height="2" fill="#A0A0A0"/><rect x="627" y="275" width="1" height="2" fill="#A0A0A0"/><rect x="627" y="279" width="1" height="2" fill="#A0A0A0"/><rect x="627" y="283" width="1" height="2" fill="#A0A0A0"/><rect x="627" y="287" width="1" height="2" fill="#A0A0A0"/><rect x="627" y="291" width="1" height="2" fill="#A0A0A0"/><rect x="627" y="295" width="1" height="2" fill="#A0A0A0"/><rect x="627" y="299" width="1" height="2" fill="#A0A0A0"/><rect x="627" y="303" width="1" height="2" fill="#A0A0A0"/><rect x="627" y="307" width="1" height="2" fill="#A0A0A0"/><rect x="627" y="311" width="1" height="2" fill="#A0A0A0"/><rect x="627" y="315" width="1" height="2" fill="#A0A0A0"/><rect x="627" y="319" width="1" height="2" fill="#A0A0A0"/><rect x="627" y="323" width="1" height="2" fill="#A0A0A0"/><rect x="627" y="327" width="1" height="2" fill="#A0A0A0"/><rect x="627" y="331" width="1" height="2" fill="#A0A0A0"/><rect x="627" y="335" width="1" height="2" fill="#A0A0A0"/><rect x="627" y="339" width="1" height="2" fill="#A0A0A0"/><rect x="627" y="343" width="1" height="2" fill="#A0A0A0"/><rect x="627" y="347" width="1" height="2" fill="#A0A0A0"/><rect x="627" y="351" width="1" height="2" fill="#A0A0A0"/><rect x="627" y="355" width="1" height="2" fill="#A0A0A0"/><rect x="627" y="359" width="1" height="2" fill="#A0A0A0"/><rect x="627" y="363" width="1" height="2" fill="#A0A0A0"/><rect x="627" y="367" width="1" height="2" fill="#A0A0A0"/><rect x="627" y="371" width="1" height="2" fill="#A0A0A0"/><rect x="627" y="375" width="1" height="2" fill="#A0A0A0"/><rect x="627" y="379" width="1" height="2" fill="#A0A0A0"/><rect x="627" y="383" width="1" height="2" fill="#A0A0A0"/><rect x="627" y="387" width="1" height="2" fill="#A0A0A0"/><rect x="627" y="391" width="1" height="2" fill="#A0A0A0"/><rect x="627" y="395" width="1" height="2" fill="#A0A0A0"/><rect x="627" y="399" width="1" height="2" fill="#A0A0A0"/><rect x="627" y="403" width="1" height="2" fill="#A0A0A0"/><rect x="627" y="407" width="1" height="2" fill="#A0A0A0"/><rect x="627" y="411" width="1" height="2" fill="#A0A0A0"/><rect x="627" y="415" width="1" height="2" fill="#A0A0A0"/><rect x="627" y="419" width="1" height="2" fill="#A0A0A0"/><rect x="627" y="423" width="1" height="2" fill="#A0A0A0"/><rect x="627" y="427" width="1" height="2" fill="#A0A0A0"/><rect x="627" y="431" width="1" height="2" fill="#A0A0A0"/><rect x="627" y="435" width="1" height="2" fill="#A0A0A0"/><rect x="627" y="439" width="1" height="2" fill="#A0A0A0"/><rect x="627" y="443" width="1" height="2" fill="#A0A0A0"/><rect x="627" y="447" width="1" height="2" fill="#A0A0A0"/><rect x="627" y="451" width="1" height="2" fill="#A0A0A0"/><rect x="627" y="455" width="1" height="2" fill="#A0A0A0"/><rect x="627" y="459" width="1" height="2" fill="#A0A0A0"/><rect x="627" y="463" width="1" height="2" fill="#A0A0A0"/><rect x="627" y="467" width="1" height="2" fill="#A0A0A0"/><rect x="627" y="471" width="1" height="2" fill="#A0A0A0"/><rect x="627" y="475" width="1" height="2" fill="#A0A0A0"/><rect x="627" y="479" width="1" height="2" fill="#A0A0A0"/><rect x="627" y="483" width="1" height="2" fill="#A0A0A0"/><rect x="627" y="487" width="1" height="1" fill="#A0A0A0"/><rect x="227" y="134" width="535" height="1" fill="#B4B4B4"/><rect x="227" y="122" width="5" height="9" fill="#D8D8D8"/><rect x="231" y="122" width="1" height="9" fill="#808080"/><rect x="227" y="130" width="5" height="1" fill="#808080"/><rect x="227" y="137" width="400" height="2" fill="#000"/><rect x="627" y="151" width="135" height="1" fill="#000"/><rect x="627" y="137" width="1" height="15" fill="#000"/><rect x="227" y="156" width="400" height="2" fill="#000"/><rect x="627" y="170" width="100" height="1" fill="#000"/><rect x="627" y="156" width="1" height="15" fill="#000"/><rect x="727" y="156" width="35" height="2" fill="#000"/><rect x="727" y="156" width="1" height="15" fill="#000"/><rect x="227" y="189" width="100" height="1" fill="#000"/><rect x="327" y="175" width="300" height="2" fill="#000"/><rect x="327" y="175" width="1" height="15" fill="#000"/><rect x="627" y="189" width="100" height="1" fill="#000"/><rect x="627" y="175" width="1" height="15" fill="#000"/><rect x="727" y="175" width="35" height="2" fill="#000"/><rect x="727" y="175" width="1" height="15" fill="#000"/><rect x="227" y="194" width="100" height="2" fill="#000"/><rect x="327" y="208" width="100" height="1" fill="#000"/><rect x="327" y="194" width="1" height="15" fill="#000"/><rect x="427" y="194" width="100" height="2" fill="#000"/><rect x="427" y="194" width="1" height="15" fill="#000"/><rect x="527" y="208" width="100" height="1" fill="#000"/><rect x="527" y="194" width="1" height="15" fill="#000"/><rect x="627" y="194" width="135" height="2" fill="#000"/><rect x="627" y="194" width="1" height="15" fill="#000"/><defs><pattern id="hx" x="224" y="208" width="8" height="8" patternUnits="userSpaceOnUse"><rect x="6" y="0" width="1" height="1" fill="#000"/><rect x="7" y="0" width="1" height="1" fill="#000"/><rect x="0" y="1" width="1" height="1" fill="#000"/><rect x="5" y="1" width="1" height="1" fill="#000"/><rect x="1" y="2" width="1" height="1" fill="#000"/><rect x="4" y="2" width="1" height="1" fill="#000"/><rect x="2" y="3" width="1" height="1" fill="#000"/><rect x="3" y="3" width="1" height="1" fill="#000"/><rect x="2" y="4" width="1" height="1" fill="#000"/><rect x="3" y="4" width="1" height="1" fill="#000"/><rect x="1" y="5" width="1" height="1" fill="#000"/><rect x="4" y="5" width="1" height="1" fill="#000"/><rect x="0" y="6" width="1" height="1" fill="#000"/><rect x="5" y="6" width="1" height="1" fill="#000"/><rect x="6" y="7" width="1" height="1" fill="#000"/><rect x="7" y="7" width="1" height="1" fill="#000"/></pattern></defs><rect x="227" y="213" width="535" height="14" fill="url(#hx)"/><rect x="226" y="128" width="2" height="360" fill="#00005E"/></svg>
<div class="a q" style="left:228px;top:88px">0 ps</div>
<div class="a q" style="left:411px;top:88px">10.0 ns</div>
<div class="a q" style="left:611px;top:88px">20.0 ns</div>
<div class="a q" style="left:228px;top:106px">0 ps</div>
<div class="a sb" style="left:60px;top:488px;width:159px"></div>
<div class="a sb" style="left:227px;top:488px;width:535px"></div>
<div class="sbtn" style="left:61px;top:489px;background:#F0EFEA;border-color:#fff"></div>
<div class="sbtn" style="left:203px;top:489px;background:#F0EFEA;border-color:#fff"></div>
<div class="sbtn" style="left:228px;top:489px;background:linear-gradient(135deg,#DDE6FD,#B8CBF8)"></div>
<div class="sbtn" style="left:244px;top:489px;width:12px;background:linear-gradient(135deg,#DDE6FD,#B8CBF8)"></div>
<div class="sbtn" style="left:745px;top:489px;background:linear-gradient(135deg,#DDE6FD,#B8CBF8)"></div>
<svg class="a" style="left:0;top:0" width="768" height="528">
<path d="M69.5 492 L65 496.5 L69.5 501" stroke="#CFCDC4" stroke-width="2.2" fill="none"/>
<path d="M209.5 492 L214 496.5 L209.5 501" stroke="#CFCDC4" stroke-width="2.2" fill="none"/>
<path d="M236.5 492 L232 496.5 L236.5 501" stroke="#4D6185" stroke-width="2.4" fill="none"/>
<path d="M751 492 L755.5 496.5 L751 501" stroke="#4D6185" stroke-width="2.4" fill="none"/>
</svg>
<div class="a" style="left:5px;top:511px">For Help, press F1</div>
<div class="sp" style="left:573px;width:85px"></div>
<div class="sp" style="left:660px;width:26px"></div>
<div class="sp" style="left:688px;width:28px"></div>
<div class="sp" style="left:718px;width:27px"></div>
<div class="a" style="left:689px;top:511px;letter-spacing:-0.9px">NUM</div>
<svg class="a" style="left:745px;top:507px" width="19" height="17"><path d="M17 5 L5 17 M17 9 L9 17 M17 13 L13 17" stroke="#ACA899" stroke-width="1.5"/><path d="M18 6 L6 18 M18 10 L10 18 M18 14 L14 18" stroke="#fff" stroke-width="1"/></svg>
</body></html>
